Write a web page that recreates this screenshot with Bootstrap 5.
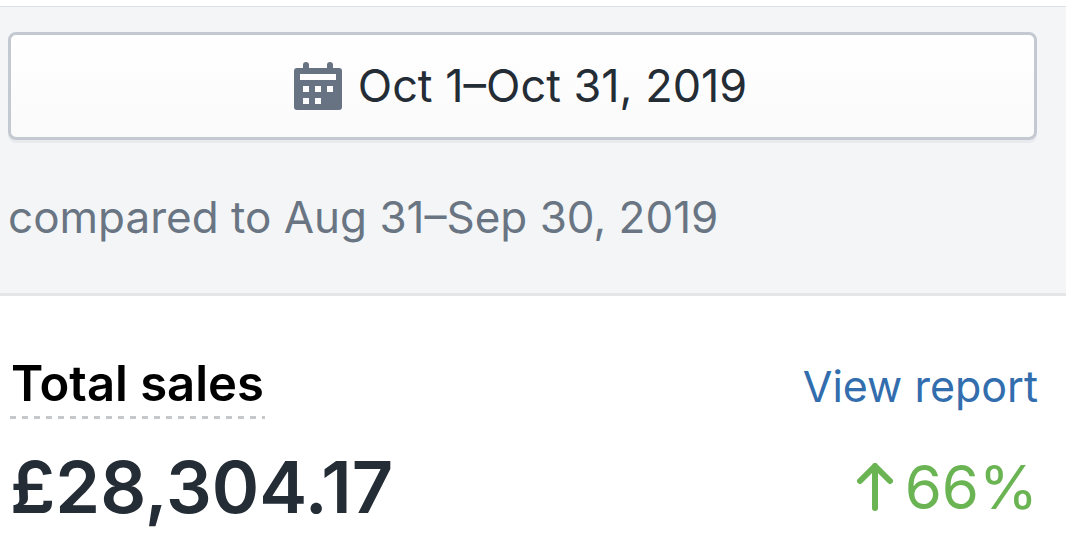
<!DOCTYPE html>
<html lang="en">
<head>
<meta charset="utf-8">
<meta name="viewport" content="width=device-width, initial-scale=1">
<title>Total sales</title>
<link href="https://cdn.jsdelivr.net/npm/bootstrap@5.3.0/dist/css/bootstrap.min.css" rel="stylesheet">
<style>
body{font-family:Inter,"Liberation Sans",sans-serif;background:#fff;color:#242c35}
.filters{background:#f3f5f7;border-top:1px solid #dcdfe2;border-bottom:3px solid #e4e6e8;margin-top:6px;padding:25px 29px 46px 8px}
.date-btn,.date-btn:hover{height:108px;border:3px solid #c4c9d1;border-radius:8px;background:linear-gradient(#fff,#fafafb);box-shadow:0 3px 0 #e8eaed;font-size:45px;line-height:60px;color:#242c35;padding:0 4px 0 0}
.compare{font-size:44px;line-height:60px;color:#6a7583;margin-top:47px}
.sales{padding:56px 28px 0 10px}
.sales-title{font-size:49px;line-height:64px;font-weight:600;color:#000;padding:0 1px 3px;background:repeating-linear-gradient(90deg,#c6c9cc 0 6px,transparent 6px 12px) bottom/100% 3px no-repeat}
.report{font-size:43px;line-height:64px;color:#326dae}
.totals{margin-top:28px}
.amount{font-size:72px;line-height:80px;font-weight:600}
.growth{font-size:60px;line-height:80px;color:#6bb454;gap:12px}
</style>
</head>
<body>
<section class="filters">
  <button type="button" class="btn date-btn w-100 d-flex align-items-center justify-content-center gap-3">
    <svg width="48" height="48" viewBox="0 0 48 48" aria-hidden="true">
      <path fill="#677282" fill-rule="evenodd" d="M9 6V3a3 3 0 0 1 6 0v3h18V3a3 3 0 0 1 6 0v3h6a3 3 0 0 1 3 3v36a3 3 0 0 1-3 3H3a3 3 0 0 1-3-3V9a3 3 0 0 1 3-3zM6 12v6h36v-6zM9 24v6h6v-6zM21 24v6h6v-6zM33 24v6h6v-6zM9 36v6h6v-6zM21 36v6h6v-6z"/>
    </svg>
    <span>Oct 1–Oct 31, 2019</span>
  </button>
  <p class="compare mb-0">compared to Aug 31–Sep 30, 2019</p>
</section>
<main class="sales">
  <div class="d-flex justify-content-between align-items-center">
    <h1 class="sales-title mb-0">Total sales</h1>
    <a href="#" class="report text-decoration-none">View report</a>
  </div>
  <div class="totals d-flex justify-content-between align-items-center">
    <div class="amount">£28,304.17</div>
    <div class="growth d-flex align-items-center">
      <svg width="36" height="48" viewBox="0 0 36 48" aria-hidden="true">
        <path d="M18 45V3M3 18L18 3l15 15" fill="none" stroke="currentColor" stroke-width="6" stroke-linecap="round" stroke-linejoin="round"/>
      </svg>
      <span>66%</span>
    </div>
  </div>
</main>
<script src="https://cdn.jsdelivr.net/npm/bootstrap@5.3.0/dist/js/bootstrap.bundle.min.js"></script>
</body>
</html>
